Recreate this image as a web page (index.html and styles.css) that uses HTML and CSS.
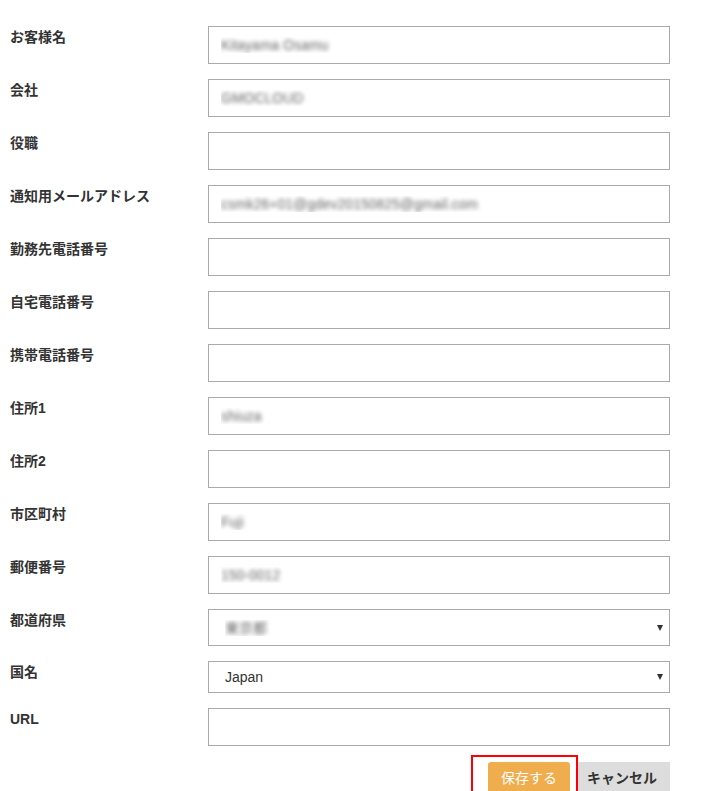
FILE: index.html
```html
<!DOCTYPE html>
<html lang="ja">
<head>
  <meta charset="UTF-8" />
  <meta name="viewport" content="width=device-width, initial-scale=1.0"/>
  <title>お客様情報</title>
  <link rel="stylesheet" href="styles.css">
</head>
<body>
  <form class="perfil">
    <div class="linha">
      <label>お客様名</label>
      <input type="text" class="campo oculto" value="Kitayama Osamu">
    </div>
    <div class="linha">
      <label>会社</label>
      <input type="text" class="campo oculto" value="GMOCLOUD">
    </div>
    <div class="linha">
      <label>役職</label>
      <input type="text" class="campo">
    </div>
    <div class="linha">
      <label>通知用メールアドレス</label>
      <input type="text" class="campo oculto" value="csmk26+01@gdev20150825@gmail.com">
    </div>
    <div class="linha">
      <label>勤務先電話番号</label>
      <input type="text" class="campo">
    </div>
    <div class="linha">
      <label>自宅電話番号</label>
      <input type="text" class="campo">
    </div>
    <div class="linha">
      <label>携帯電話番号</label>
      <input type="text" class="campo">
    </div>
    <div class="linha">
      <label>住所1</label>
      <input type="text" class="campo oculto" value="shiuza">
    </div>
    <div class="linha">
      <label>住所2</label>
      <input type="text" class="campo">
    </div>
    <div class="linha">
      <label>市区町村</label>
      <input type="text" class="campo oculto" value="Fuji">
    </div>
    <div class="linha">
      <label>郵便番号</label>
      <input type="text" class="campo oculto" value="150-0012">
    </div>
    <div class="linha">
      <label>都道府県</label>
      <div class="seletor">
        <select class="campo oculto medio">
          <option>東京都</option>
        </select>
      </div>
    </div>
    <div class="linha">
      <label>国名</label>
      <div class="seletor">
        <select class="campo baixo">
          <option>Japan</option>
        </select>
      </div>
    </div>
    <div class="linha">
      <label>URL</label>
      <input type="text" class="campo">
    </div>

    <div class="acoes">
      <button type="button" class="salvar">保存する<span class="destaque"></span></button>
      <button type="button" class="cancelar">キャンセル</button>
    </div>
  </form>
</body>
</html>
```

FILE: styles.css
```css
body {
  margin: 0;
  padding: 26px 34px 0 10px;
  background-color: white;
  color: #333;
  font-family: 'Liberation Sans', 'Noto Sans CJK JP', sans-serif;
  font-size: 14px;
  overflow: hidden;
}

.perfil {
  width: 660px;
}

.linha {
  display: grid;
  grid-template-columns: 198px 462px;
  margin-bottom: 15px;
}

.linha label {
  font-weight: bold;
  line-height: 20px;
  padding-top: 1px;
}

.campo {
  box-sizing: border-box;
  width: 100%;
  height: 38px;
  margin: 0;
  padding: 0 12px;
  border: 1px solid #aaa;
  border-radius: 0;
  background-color: white;
  color: #333;
  font-family: 'Liberation Sans', 'Noto Sans CJK JP', sans-serif;
  font-size: 14px;
  outline: none;
}

/* valores borrados do print */
.oculto {
  color: transparent;
  text-shadow: 0 0 4px rgba(0, 0, 0, 0.6);
}

.seletor {
  position: relative;
}

.seletor select {
  appearance: none;
  -webkit-appearance: none;
  padding-left: 16px;
}

.seletor select.medio {
  height: 37px;
}

.seletor select.baixo {
  height: 32px;
}

.seletor::after {
  content: "";
  position: absolute;
  right: 7px;
  top: 50%;
  margin-top: -3px;
  border-left: 3px solid transparent;
  border-right: 3px solid transparent;
  border-top: 6px solid #333;
  pointer-events: none;
}

.acoes {
  display: flex;
  justify-content: flex-end;
  gap: 7px;
  margin-top: 16px;
}

.acoes button {
  height: 32px;
  border: none;
  font-family: 'Liberation Sans', 'Noto Sans CJK JP', sans-serif;
  font-size: 14px;
  line-height: 20px;
  cursor: pointer;
}

.salvar {
  position: relative;
  width: 82px;
  background-color: #f0ad4e;
  color: white;
  border-radius: 3px 3px 0 0;
}

.destaque {
  position: absolute;
  left: -17px;
  top: -7px;
  width: 103px;
  height: 38px;
  border: 2px solid #f00;
  pointer-events: none;
}

.cancelar {
  width: 93px;
  padding: 0 0 0 10px;
  background-color: #ddd;
  color: #333;
  font-weight: bold;
  font-size: 15px;
  text-align: left;
}
```
